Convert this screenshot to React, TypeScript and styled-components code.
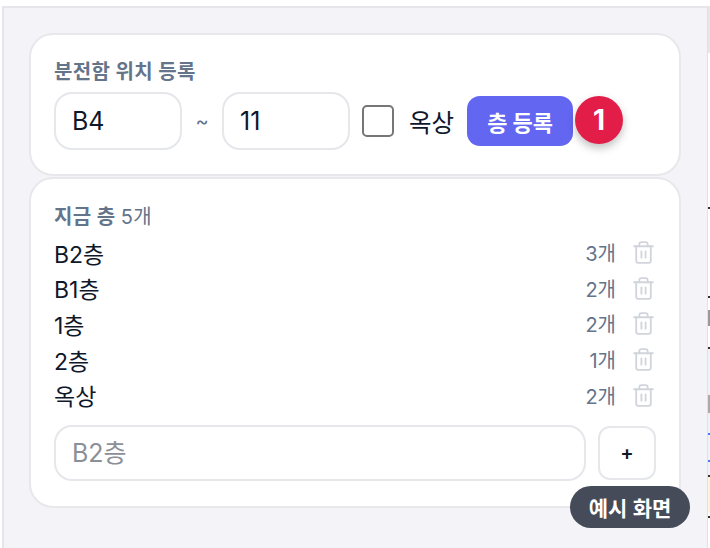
import { createGlobalStyle, styled } from 'styled-components';
import { Trash2 } from 'lucide-react';

const GlobalStyle = createGlobalStyle`
  * {
    box-sizing: border-box;
  }
  html, body {
    margin: 0;
    padding: 0;
    background: #ffffff;
  }
  body {
    font-family: Inter, 'Noto Sans CJK KR', sans-serif;
    color: #0f172a;
  }
`;

const SPage = styled.div`
  position: relative;
  width: 710px;
  height: 548px;
  overflow: hidden;
  padding-top: 6px;
  padding-left: 2px;
  display: flex;
`;
const SPanel = styled.div`
  width: 706px;
  height: 542px;
  background: #f3f3f8;
  border-top: 2px solid #e5e5ea;
  border-left: 2px solid #e5e5ea;
  border-right: 1px solid #e0e0e6;
  padding: 25px 26px 0 25px;
  display: flex;
  flex-direction: column;
  gap: 1px;
`;
const SEdge = styled.div`
  width: 2px;
  display: flex;
  flex-direction: column;
`;
const SEdgeBit = styled.span<{ $h: number; $c: string }>`
  height: ${({ $h }) => $h}px;
  background: ${({ $c }) => $c};
`;
const SCard = styled.section`
  background: #ffffff;
  border: 2px solid #e8e8ec;
  border-radius: 24px;
`;
const SFormCard = styled(SCard)`
  height: 143px;
  padding: 24px 23px 0;
`;
const SListCard = styled(SCard)`
  height: 331px;
  padding: 25px 23px 0;
`;
const SLabel = styled.div`
  font-size: 20px;
  line-height: 26px;
  font-weight: 600;
  color: #64748b;
  letter-spacing: 0.3px;
`;
const SCount = styled.span`
  font-weight: 400;
`;
const SFormRow = styled.div`
  display: flex;
  align-items: center;
  margin-top: 7px;
  height: 58px;
`;
const SInput = styled.input<{ $w: number; $h: number }>`
  width: ${({ $w }) => $w}px;
  height: ${({ $h }) => $h}px;
  border: 2px solid #e5e7eb;
  border-radius: 18px;
  padding: 0 16px;
  background: #ffffff;
  font-family: inherit;
  font-size: 25px;
  color: #0f172a;
  outline: none;

  &::placeholder {
    color: #8b8f98;
    opacity: 1;
  }
`;
const STilde = styled.span`
  width: 40px;
  text-align: center;
  font-size: 20px;
  color: #64748b;
`;
const SCheck = styled.span`
  width: 32px;
  height: 32px;
  margin-left: 12px;
  border: 2px solid #767676;
  border-radius: 5px;
  background: #ffffff;
`;
const SCheckText = styled.span`
  margin-left: 15px;
  font-size: 24.5px;
  color: #0f172a;
`;
const SRegister = styled.button`
  width: 106px;
  height: 50px;
  margin-left: 13px;
  padding: 0;
  border: none;
  border-radius: 13px;
  background: #6366f1;
  color: #ffffff;
  font-family: inherit;
  font-size: 22px;
  font-weight: 700;
`;
const SBadge = styled.span`
  width: 48px;
  height: 48px;
  margin-left: 2px;
  margin-top: -2px;
  border-radius: 50%;
  background: #e11d48;
  color: #ffffff;
  font-size: 28px;
  font-weight: 700;
  display: flex;
  align-items: center;
  justify-content: center;
  box-shadow: 0 4px 8px rgba(0, 0, 0, 0.25);
`;
const SList = styled.ul`
  list-style: none;
  margin: 5px 0 0;
  padding: 0;
`;
const SRow = styled.li`
  height: 35.6px;
  display: flex;
  align-items: center;
  font-size: 23px;
  color: #0f172a;
`;
const SFloor = styled.span`
  margin-right: auto;
`;
const SNum = styled.span`
  font-size: 20px;
  color: #64748b;
  margin-right: 15px;
`;
const SBin = styled(Trash2)`
  color: #d1d5db;
`;
const SAddRow = styled.div`
  display: flex;
  align-items: center;
  gap: 12px;
  margin-top: 12px;
`;
const SAddButton = styled.button`
  width: 58px;
  height: 54px;
  padding: 0;
  border: 2px solid #e5e7eb;
  border-radius: 12px;
  background: #ffffff;
  color: #0f172a;
  font-family: inherit;
  font-size: 20px;
  font-weight: 600;
`;
const STooltip = styled.div`
  position: absolute;
  left: 570px;
  top: 486px;
  width: 120px;
  height: 42px;
  border-radius: 21px;
  background: #454b59;
  color: #ffffff;
  font-size: 21px;
  font-weight: 600;
  display: flex;
  align-items: center;
  justify-content: center;
`;

const floors = [
  { name: 'B2층', count: 3 },
  { name: 'B1층', count: 2 },
  { name: '1층', count: 2 },
  { name: '2층', count: 1 },
  { name: '옥상', count: 2 },
];

// 오른쪽 끝에 살짝 보이는 뒤쪽 창
const edgeBits = [
  { h: 47, c: '#e5e5ea' },
  { h: 154, c: '#ffffff' },
  { h: 2, c: '#333333' },
  { h: 87, c: '#ffffff' },
  { h: 2, c: '#333333' },
  { h: 12, c: '#ffffff' },
  { h: 16, c: '#999999' },
  { h: 21, c: '#ffffff' },
  { h: 2, c: '#333333' },
  { h: 46, c: '#eef2fa' },
  { h: 18, c: '#aaaaaa' },
  { h: 20, c: '#eef2fa' },
  { h: 2, c: '#3b82f6' },
  { h: 25, c: '#eef2fa' },
  { h: 2, c: '#3b82f6' },
  { h: 13, c: '#eef2fa' },
  { h: 2, c: '#333333' },
  { h: 36, c: '#fdf6dc' },
  { h: 3, c: '#ffffff' },
  { h: 2, c: '#333333' },
];

const App = () => {
  return (
    <SPage>
      <GlobalStyle />
      <SPanel>
        <SFormCard>
          <SLabel>분전함 위치 등록</SLabel>
          <SFormRow>
            <SInput $w={128} $h={58} defaultValue="B4" />
            <STilde>~</STilde>
            <SInput $w={128} $h={58} defaultValue="11" />
            <SCheck />
            <SCheckText>옥상</SCheckText>
            <SRegister>층 등록</SRegister>
            <SBadge>1</SBadge>
          </SFormRow>
        </SFormCard>
        <SListCard>
          <SLabel>
            지금 층 <SCount>5개</SCount>
          </SLabel>
          <SList>
            {floors.map((floor) => (
              <SRow key={floor.name}>
                <SFloor>{floor.name}</SFloor>
                <SNum>{floor.count}개</SNum>
                <SBin size={25} strokeWidth={1.75} />
              </SRow>
            ))}
          </SList>
          <SAddRow>
            <SInput $w={532} $h={56} placeholder="B2층" />
            <SAddButton>+</SAddButton>
          </SAddRow>
        </SListCard>
      </SPanel>
      <SEdge>
        {edgeBits.map((bit, i) => (
          <SEdgeBit key={i} $h={bit.h} $c={bit.c} />
        ))}
      </SEdge>
      <STooltip>예시 화면</STooltip>
    </SPage>
  );
};

export default App;
